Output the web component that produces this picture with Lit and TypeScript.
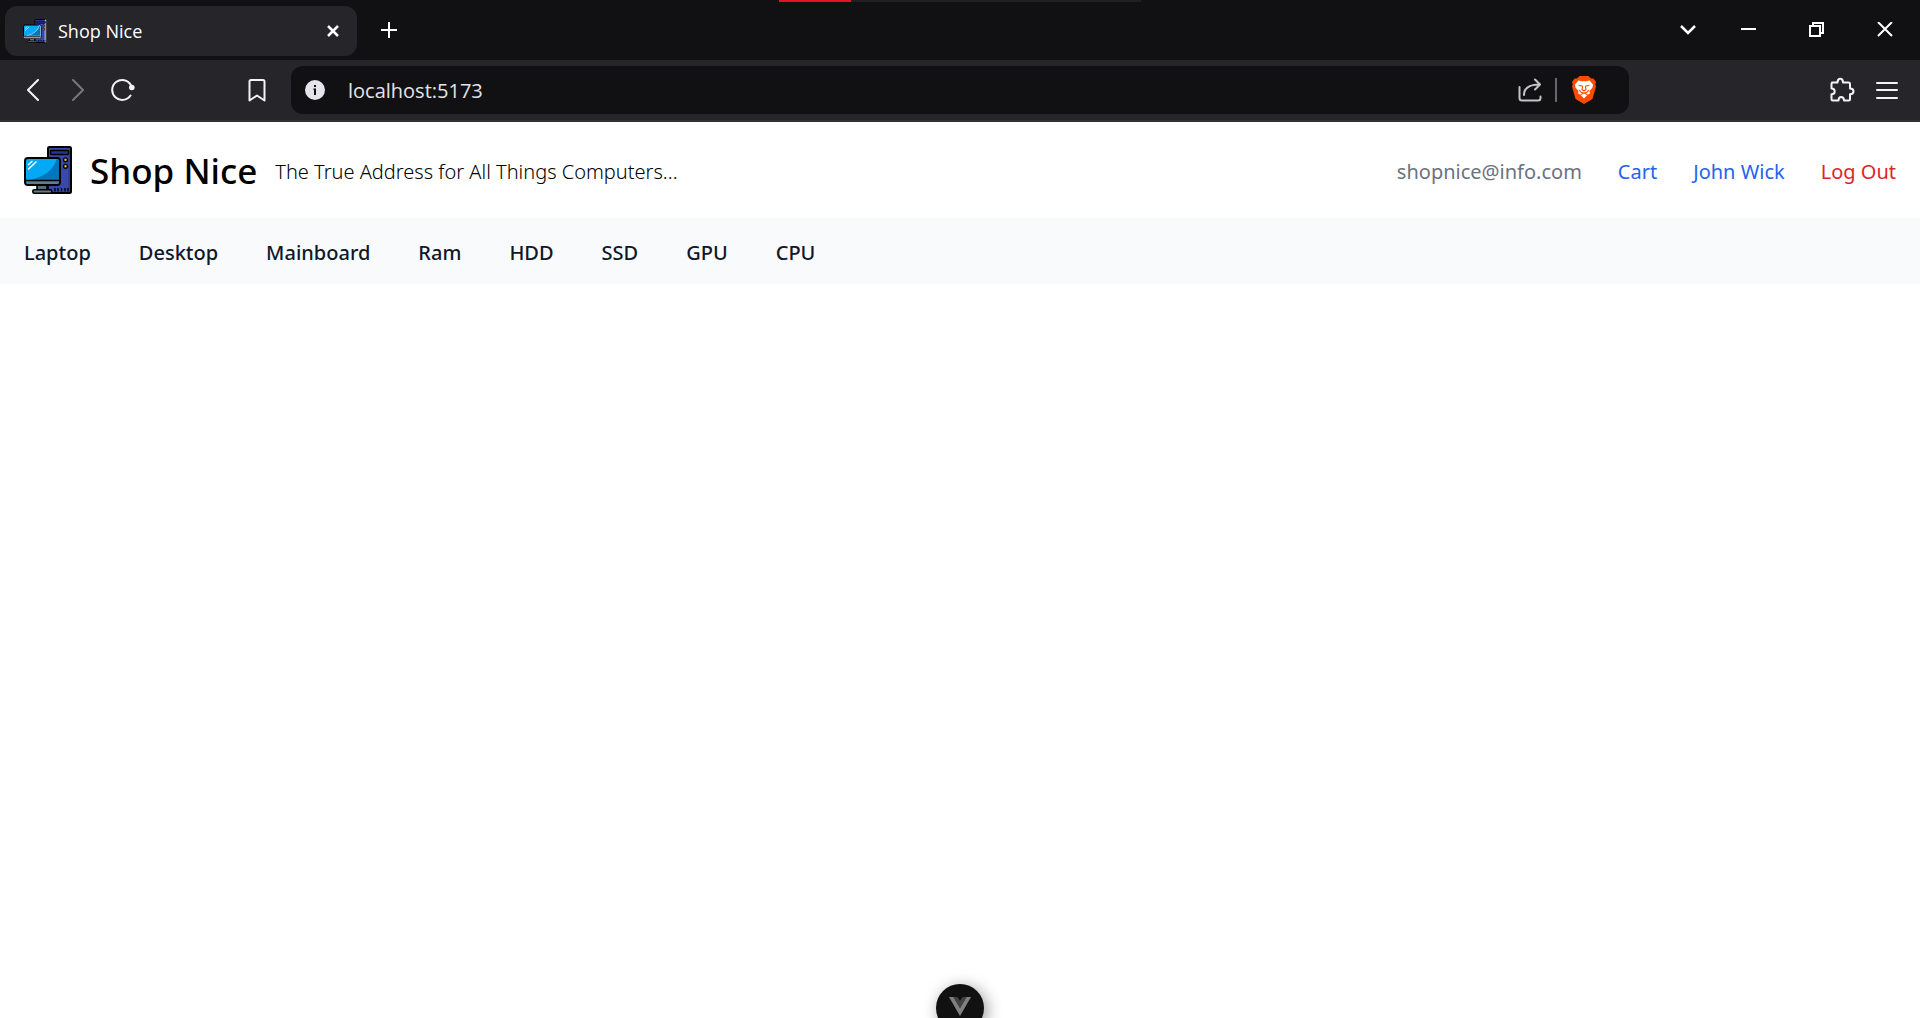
import { LitElement, html, css, svg } from "lit";
import { customElement } from "lit/decorators.js";

const computer = () => html`<svg class="computer" viewBox="0 0 48 48" aria-hidden="true">
  ${svg`
  <rect x="24" y="1" width="23" height="46" rx="1.5" fill="#3949ab" stroke="#000" stroke-width="2"/>
  <rect x="44" y="2" width="2" height="44" fill="#303f9f"/>
  <rect x="26.5" y="4.5" width="18" height="4" rx="1" fill="#283593" stroke="#000" stroke-width="1.5"/>
  <circle cx="41.5" cy="13.8" r="1.9" fill="#fbc02d" stroke="#000" stroke-width="1.4"/>
  <circle cx="41.5" cy="20.3" r="1.9" fill="#fbc02d" stroke="#000" stroke-width="1.4"/>
  <path d="M31 42v3.500M34 42v3.500M37.500 42v3.500M41 42v3.500M44 42v3.500" stroke="#000" stroke-width="1.400"/>
  <rect x="13" y="39" width="10" height="6" fill="#546e7a" stroke="#000" stroke-width="1.600"/>
  <rect x="8.800" y="43.800" width="19" height="3.400" rx="1.500" fill="#607d8b" stroke="#000" stroke-width="1.600"/>
  <rect x="1" y="12" width="35" height="27" rx="3" fill="#03a9f4" stroke="#000" stroke-width="2"/>
  <path d="M32.500 13Q29 28 7 34H35V15Q35 13 32.500 13Z" fill="#0277bd"/>
  <path d="M2 34.500H35V36Q35 38 33 38H4Q2 38 2 36Z" fill="#607d8b"/>
  <path d="M2 34.500H35" stroke="#000" stroke-width="1.600"/>
  <path d="M4 19l4.500-4M4 23.500l8.500-8" stroke="#fff" stroke-width="1.400" fill="none"/>`}
</svg>`;

@customElement("browser-tabs")
export class BrowserTabs extends LitElement {
  static styles = css`
    :host { display: block; background: #111113; color: #fff; }
    .bar { display: flex; align-items: center; height: 60px; position: relative; }
    .tab {
      display: flex; align-items: center; gap: 11px; box-sizing: border-box;
      width: 352px; height: 50px; margin: 2px 0 0 5px; padding: 0 10px 0 18px;
      border-radius: 12px; background: #25252a;
      font: 18px/24px "Open Sans", "Noto Sans", sans-serif;
    }
    .computer { width: 24px; height: 24px; flex: none; }
    .label { flex: 1; }
    button {
      display: grid; place-items: center; padding: 0; border: 0;
      background: none; color: inherit; height: 60px;
    }
    .close { width: 28px; height: 28px; }
    .add { width: 48px; margin-left: 8px; }
    svg { display: block; fill: none; stroke: currentColor; }
    .windows { display: flex; margin-left: auto; padding-right: 1px; }
    .chevron { width: 54px; }
    .win { width: 68px; }
    .progress {
      position: absolute; top: 0; left: 50%; width: 362px; height: 2px;
      transform: translateX(-50%); background: #202022;
    }
    .value { width: 20%; height: 100%; background: #e81224; }
  `;
  render() {
    return html`<div class="bar">
      <div class="progress"><div class="value"></div></div>
      <div class="tab">
        ${computer()}<span class="label">Shop Nice</span>
        <button class="close" aria-label="Close tab">
          <svg width="14" height="14" stroke-width="2.500"><path d="M2 2l10 10M12 2L2 12"/></svg>
        </button>
      </div>
      <button class="add" aria-label="New tab">
        <svg width="16" height="16" stroke-width="2"><path d="M8 0v16M0 8h16"/></svg>
      </button>
      <div class="windows">
        <button class="chevron" aria-label="Search tabs">
          <svg width="16" height="10" stroke-width="2.500"><path d="M1 1l7 7 7-7"/></svg>
        </button>
        <button class="win" aria-label="Minimize">
          <svg width="16" height="16" stroke-width="2"><path d="M0 7h15"/></svg>
        </button>
        <button class="win" aria-label="Restore">
          <svg width="16" height="16" stroke-width="2"><path d="M1 4h10v10H1zM4 4V1h10v10h-3"/></svg>
        </button>
        <button class="win" aria-label="Close window">
          <svg width="16" height="16" stroke-width="2"><path d="M1 0l14 14M15 0L1 14"/></svg>
        </button>
      </div>
    </div>`;
  }
}

@customElement("browser-toolbar")
export class BrowserToolbar extends LitElement {
  static styles = css`
    :host { display: block; background: #25252a; color: #f4f4f6; border-bottom: 2px solid #323035; }
    .bar { display: flex; align-items: center; height: 60px; padding: 0 11px 0 10px; }
    button {
      display: grid; place-items: center; padding: 0; border: 0; flex: none;
      width: 45px; height: 48px; background: none; color: inherit;
    }
    svg { display: block; fill: none; stroke: currentColor; stroke-width: 2; stroke-linecap: round; stroke-linejoin: round; }
    .dim { color: #77777b; }
    .bookmark { margin-left: 89px; }
    .address {
      display: flex; align-items: center; box-sizing: border-box; height: 48px;
      flex: 0 1 1338px; min-width: 0; margin-left: 12px; padding: 0 23px 0 1px;
      border-radius: 12px; background: #111113;
    }
    .field { display: grid; flex: 1; min-width: 0; font: 20px/28px "Open Sans", "Noto Sans", sans-serif; }
    .url {
      grid-area: 1 / 1; margin: 0 0 0 11px; padding: 2px 0 0; border: 0; outline: 0;
      min-width: 0; background: none; color: #e4e4e8; font: inherit;
    }
    .share { color: #c4c4c8; }
    .rule { width: 2px; height: 24px; background: #68686c; margin: 0 4px 0 3px; }
    .menu { display: flex; margin-left: auto; }
    .filled { stroke: none; }
  `;
  render() {
    return html`<div class="bar">
      <button aria-label="Back"><svg width="14" height="22"><path d="M12 1L2 11l10 10"/></svg></button>
      <button class="dim" aria-label="Forward"><svg width="14" height="22"><path d="M2 1l10 10L2 21"/></svg></button>
      <button aria-label="Reload">
        <svg width="24" height="24"><path d="M19.500 17.500A10 10 0 1 1 20 7.200"/><circle cx="20.800" cy="9.500" r="2.800" fill="currentColor" stroke="none"/></svg>
      </button>
      <button class="bookmark" aria-label="Bookmark">
        <svg width="18" height="24"><path d="M3 2h12q1.500 0 1.500 1.500V22.500L9 17.500 1.500 22.500V3.500Q1.500 2 3 2z"/></svg>
      </button>
      <div class="address">
        <button aria-label="Site information">
          <svg class="filled" width="20" height="20"><circle cx="10" cy="10" r="10" fill="#e4e4ea"/><path d="M8.500 8.500h2.500V15H9V10h-.5zM9 5h2v2H9z" fill="#111113"/></svg>
        </button>
        <div class="field"><input class="url" aria-label="Address" value="localhost:5173" /></div>
        <button class="share" aria-label="Share">
          <svg width="24" height="24"><path d="M1.500 9v11q0 2.500 2.500 2.500h16q2.500 0 2.500-2.500v-1.500M6 17q0-10.500 15.500-10.500M17 1.500l5 5-5 5"/></svg>
        </button>
        <div class="rule"></div>
        <button aria-label="Brave Shields">
          <svg class="filled" width="24" height="28" viewBox="0 0 24 28">
            <path fill="#fb4b02" d="M7.500 0h9L19 2.500 21.500 2.500 24 6l-.8 2.500L24 10.500 20.500 23 12 28 3.500 23 0 10.500 .8 8.500 0 6 2.500 2.500H5z"/>
            <path fill="#fff" d="M6.500 4.500l3.500.8h4l3.500-.8L21 8.500l-.5 3-3 3.500.4 2.500-2.600 1.500L12 22.500 8.700 19l-2.600-1.500.4-2.500-3-3.500-.5-3z"/>
            <path fill="#fb4b02" d="M6.500 8.800l4 .6.300 1.500-1-.4-3.300-.7zM17.500 8.800l-4 .6-.3 1.500 1-.4 3.300-.7z"/>
            <path fill="none" stroke="#fb4b02" stroke-width="1.100" d="M10.600 10.500L10 13.500l2 1.500 2-1.500-.6-3M7.500 14.300l1.500 1.900L12 17.300l3-1.100 1.500-1.900M9 18.600L12 16.800l3 1.800"/>
          </svg>
        </button>
      </div>
      <div class="menu">
        <button aria-label="Extensions">
          <svg width="26" height="26" viewBox="0 0 26 26"><path d="M3 5.500h5.500c0-2 .3-3.800 2.800-3.800S14 3.500 14 5.500h5.500q1.500 0 1.500 1.500v4.500c2 0 3.500.5 3.500 2.800s-1.500 2.900-3.500 2.900V22q0 1.500-1.500 1.500H15c0-2-.6-3.600-2.800-3.600S9.500 21.500 9.500 23.500H4q-1.500 0-1.500-1.500v-4.700c2 0 3.200-.9 3.200-2.800S4.500 11.600 2.500 11.600V7Q2.500 5.500 4 5.500"/></svg>
        </button>
        <button aria-label="Menu">
          <svg width="24" height="20"><path d="M2 3h20M2 10h20M2 18h20"/></svg>
        </button>
      </div>
    </div>`;
  }
}

const CATEGORIES = ["Laptop", "Desktop", "Mainboard", "Ram", "HDD", "SSD", "GPU", "CPU"];

@customElement("shop-page")
export class ShopPage extends LitElement {
  static styles = css`
    :host { display: block; background: #fff; color: #000; font: 20px/30px "Noto Sans", "Open Sans", sans-serif; }
    a { color: inherit; text-decoration: none; }
    .header { display: flex; align-items: center; justify-content: space-between; padding: 24px; }
    .brand { display: flex; align-items: center; gap: 18px; }
    .computer { display: block; width: 48px; height: 48px; }
    .name { margin: 0; padding-top: 2px; font-size: 35px; line-height: 46px; font-weight: 500; }
    .tagline { margin: 0; padding-top: 4px; font-weight: 350; }
    .account { display: flex; gap: 36px; padding-top: 4px; color: #2563eb; }
    .email { color: #6b7280; }
    .logout { color: #dc2626; }
    .categories {
      display: flex; gap: 48px; padding: 20px 24px 16px; background: #f8fafc; color: #0f172a;
      font-weight: 500;
    }
  `;
  render() {
    return html`<header class="header">
        <div class="brand">
          ${computer()}
          <h1 class="name">Shop Nice</h1>
          <p class="tagline">The True Address for All Things Computers...</p>
        </div>
        <div class="account">
          <a class="email" href="mailto:shopnice@info.com">shopnice@info.com</a>
          <a href="#cart">Cart</a>
          <a href="#profile">John Wick</a>
          <a class="logout" href="#logout">Log Out</a>
        </div>
      </header>
      <nav class="categories" aria-label="Categories">
        ${CATEGORIES.map((name) => html`<a href="#${name.toLowerCase()}">${name}</a>`)}
      </nav>`;
  }
}

@customElement("app-root")
export class AppRoot extends LitElement {
  static styles = css`
    :host { display: flex; flex-direction: column; min-height: 100vh; background: #fff; }
    .devtools {
      position: fixed; left: 50%; bottom: -14px; transform: translateX(-50%);
      display: grid; place-items: center; width: 48px; height: 48px; padding: 0 0 4px;
      border: 0; border-radius: 50%; background: #111; box-shadow: 3px 3px 16px rgba(0, 0, 0, 0.4);
    }
  `;
  render() {
    return html`<browser-tabs></browser-tabs>
      <browser-toolbar></browser-toolbar>
      <shop-page></shop-page>
      <button class="devtools" aria-label="Toggle Vue DevTools">
        <svg width="22" height="19" viewBox="0 0 22 19">
          <path d="M0 0h4.500L11 11 17.500 0H22L11 19z" fill="#808080"/>
          <path d="M4.500 0h4L11 4l2.500-4h4L11 11z" fill="#444"/>
        </svg>
      </button>`;
  }
}
